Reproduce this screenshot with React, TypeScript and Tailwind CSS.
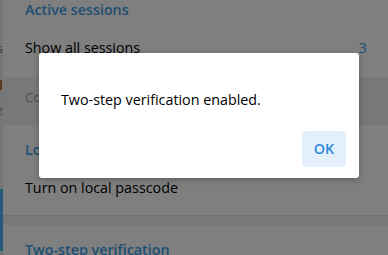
import React from "react";

const font = { fontFamily: '"Open Sans", "Noto Sans", sans-serif' };

function SectionHeader({ children }: { children: React.ReactNode }) {
    return <div className="h-5 text-[14.3px] leading-5 font-semibold text-[#3d9fe6]">{children}</div>;
}

function Row({ label, value }: { label: string; value?: string }) {
    return (
        <div className="mt-[18px] flex h-5 items-center justify-between text-[14.3px] leading-5 text-black">
            <span>{label}</span>
            {value && <span className="text-[#3d9fe6]">{value}</span>}
        </div>
    );
}

export default function App() {
    return (
        <div className="relative h-[255px] w-[388px] overflow-hidden bg-white" style={font}>
            <div className="flex h-full">
                {/* edge of the sidebar that is cut off */}
                <div className="flex w-[3px] shrink-0 flex-col overflow-hidden bg-[#ececec]">
                    <div className="mt-[40px] flex h-4 justify-end whitespace-nowrap text-[13px] leading-4 text-[#777]">
                        <span>sessions</span>
                    </div>
                    <div className="mt-[24px] h-[10px] w-[2px] bg-[#b47440]" />
                    <div className="mt-[12px] flex h-4 justify-end whitespace-nowrap text-[13px] leading-4 text-[#999]">
                        <span>z</span>
                    </div>
                    <div className="mt-[71px] h-[62px] w-[3px] bg-[#4eb2fa]" />
                </div>

                <div className="-mt-[15px] flex min-w-0 flex-1 flex-col">
                    <div className="h-[92px] shrink-0 bg-white pl-[22px] pr-[21px] pt-[15px]">
                        <SectionHeader>Active sessions</SectionHeader>
                        <Row label="Show all sessions" value="3" />
                    </div>
                    <div className="h-[48px] shrink-0 bg-[#f1f1f1] pl-[22px] pt-[11px] text-[13px] leading-[18px] text-[#999]">
                        Control your sessions on other devices.
                    </div>
                    <div className="h-[90px] shrink-0 bg-white pl-[22px] pr-[21px] pt-[15px]">
                        <SectionHeader>Local passcode</SectionHeader>
                        <Row label="Turn on local passcode" />
                    </div>
                    <div className="h-[10px] shrink-0 border-t border-[#e4e4e4] bg-[#f1f1f1]" />
                    <div className="flex-1 bg-white pl-[22px] pt-[15px]">
                        <SectionHeader>Two-step verification</SectionHeader>
                    </div>
                </div>
            </div>

            {/* dimming layer */}
            <div className="absolute inset-0 bg-black/50" />

            <div className="absolute left-[39px] top-[53px] flex h-[125px] w-[320px] flex-col rounded-[3px] bg-white shadow-[0_2px_6px_rgba(0,0,0,0.25)]">
                <div className="px-[22px] pt-[37px] text-[14.3px] leading-5 text-black">
                    Two-step verification enabled.
                </div>
                <div className="mt-auto flex justify-end pb-[11px] pr-[13px]">
                    <button className="h-9 w-11 rounded-[4px] bg-[#e3f0fb] text-[14.3px] font-semibold text-[#2a8ad8]">
                        OK
                    </button>
                </div>
            </div>
        </div>
    );
}
